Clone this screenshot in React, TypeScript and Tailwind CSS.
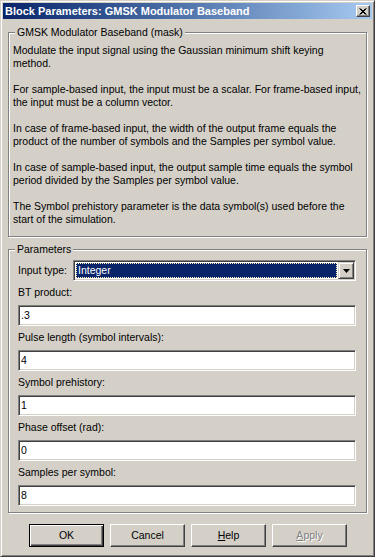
import type { ReactNode } from 'react';

function GroupBox({ title, className, children }: { title: string; className?: string; children: ReactNode }) {
  return (
    <div className={`relative mx-[5px] border border-[#808080] shadow-[inset_1px_1px_0_#fff,1px_1px_0_#fff] ${className ?? ''}`}>
      <span className="absolute left-[6px] top-[-7px] bg-[#d4d0c8] px-[2px] leading-[13px] whitespace-nowrap">{title}</span>
      {children}
    </div>
  );
}

function Label({ children }: { children: ReactNode }) {
  return <div className="mt-[5px] h-[13px] leading-[13px] whitespace-nowrap">{children}</div>;
}

function Field({ value }: { value: string }) {
  return (
    <div className="mt-[6px] flex h-[21px] items-center border border-t-[#808080] border-l-[#808080] border-r-white border-b-white bg-white pl-[2px] shadow-[inset_1px_1px_0_#404040,inset_-1px_-1px_0_#d4d0c8]">
      {value}
    </div>
  );
}

function Button({ children, isDefault, disabled }: { children: ReactNode; isDefault?: boolean; disabled?: boolean }) {
  const edge = isDefault
    ? 'border-black shadow-[inset_1px_1px_0_#fff,inset_-1px_-1px_0_#404040,inset_-2px_-2px_0_#808080]'
    : 'border-t-white border-l-white border-r-[#404040] border-b-[#404040] shadow-[inset_-1px_-1px_0_#808080]';
  return (
    <div
      className={`flex h-[23px] w-[75px] items-center justify-center border ${edge} ${
        disabled ? 'text-[#808080] [text-shadow:1px_1px_0_#fff]' : 'text-black'
      }`}
    >
      {children}
    </div>
  );
}

export default function App() {
  return (
    <div className="h-[557px] w-[375px] overflow-hidden border border-t-[#d4d0c8] border-l-[#d4d0c8] border-r-[#404040] border-b-[#404040] bg-[#d4d0c8] p-[2px] font-['Liberation_Sans',Arial,sans-serif] text-[10.5px] text-black shadow-[inset_1px_1px_0_#fff,inset_-1px_-1px_0_#808080]">
      {/* title bar */}
      <div className="flex h-[16px] items-center bg-gradient-to-r from-[#0a246a] to-[#a6caf0] pl-[2px] pr-[2px]">
        <span className="flex-1 whitespace-nowrap text-[11px] font-bold text-white">Block Parameters: GMSK Modulator Baseband</span>
        <div className="flex h-[12px] w-[14px] items-center justify-center border border-t-white border-l-white border-r-[#404040] border-b-[#404040] bg-[#d4d0c8] shadow-[inset_-1px_-1px_0_#808080]">
          <svg width="8" height="7" viewBox="0 0 8 7">
            <path d="M0.5 0.5 L6.5 6.5 M1.5 0.5 L7.5 6.5 M6.5 0.5 L0.5 6.5 M7.5 0.5 L1.5 6.5" stroke="#000" strokeWidth="1" />
          </svg>
        </div>
      </div>

      <GroupBox title="GMSK Modulator Baseband (mask)" className="mt-[13px] pb-[10px] pl-[4px] pt-[11px]">
        <div className="whitespace-nowrap leading-[13px]">
          <p>
            Modulate the input signal using the Gaussian minimum shift keying
            <br />
            method.
          </p>
          <p className="mt-[13px]">
            For sample-based input, the input must be a scalar. For frame-based input,
            <br />
            the input must be a column vector.
          </p>
          <p className="mt-[13px]">
            In case of frame-based input, the width of the output frame equals the
            <br />
            product of the number of symbols and the Samples per symbol value.
          </p>
          <p className="mt-[13px]">
            In case of sample-based input, the output sample time equals the symbol
            <br />
            period divided by the Samples per symbol value.
          </p>
          <p className="mt-[13px]">
            The Symbol prehistory parameter is the data symbol(s) used before the
            <br />
            start of the simulation.
          </p>
        </div>
      </GroupBox>

      <GroupBox title="Parameters" className="mt-[12px] pb-[6px] pl-[9px] pr-[10px] pt-[10px]">
        <div className="flex h-[21px] items-center">
          <span className="w-[55px] whitespace-nowrap">Input type:</span>
          <div className="flex h-[21px] flex-1 border border-t-[#808080] border-l-[#808080] border-r-white border-b-white bg-white shadow-[inset_1px_1px_0_#404040,inset_-1px_-1px_0_#d4d0c8]">
            <div className="flex flex-1 p-[2px] pr-[1px]">
              <div className="flex flex-1 items-center border border-dotted border-[#ffffc0] bg-[#0a246a] pl-[1px] text-white">
                Integer
              </div>
            </div>
            <div className="mb-[1px] mr-[1px] mt-[1px] flex w-[16px] items-center justify-center border border-t-[#d4d0c8] border-l-[#d4d0c8] border-r-[#404040] border-b-[#404040] bg-[#d4d0c8] shadow-[inset_1px_1px_0_#fff,inset_-1px_-1px_0_#808080]">
              <svg width="7" height="4" viewBox="0 0 7 4">
                <path d="M0 0 H7 L3.5 4 Z" fill="#000" />
              </svg>
            </div>
          </div>
        </div>

        <Label>BT product:</Label>
        <Field value=".3" />
        <Label>Pulse length (symbol intervals):</Label>
        <Field value="4" />
        <Label>Symbol prehistory:</Label>
        <Field value="1" />
        <Label>Phase offset (rad):</Label>
        <Field value="0" />
        <Label>Samples per symbol:</Label>
        <Field value="8" />
      </GroupBox>

      <div className="mt-[11px] flex gap-[6px] pl-[26px]">
        <Button isDefault>OK</Button>
        <Button>Cancel</Button>
        <Button>
          <span>
            <span className="underline">H</span>elp
          </span>
        </Button>
        <Button disabled>
          <span>
            <span className="underline">A</span>pply
          </span>
        </Button>
      </div>
    </div>
  );
}
